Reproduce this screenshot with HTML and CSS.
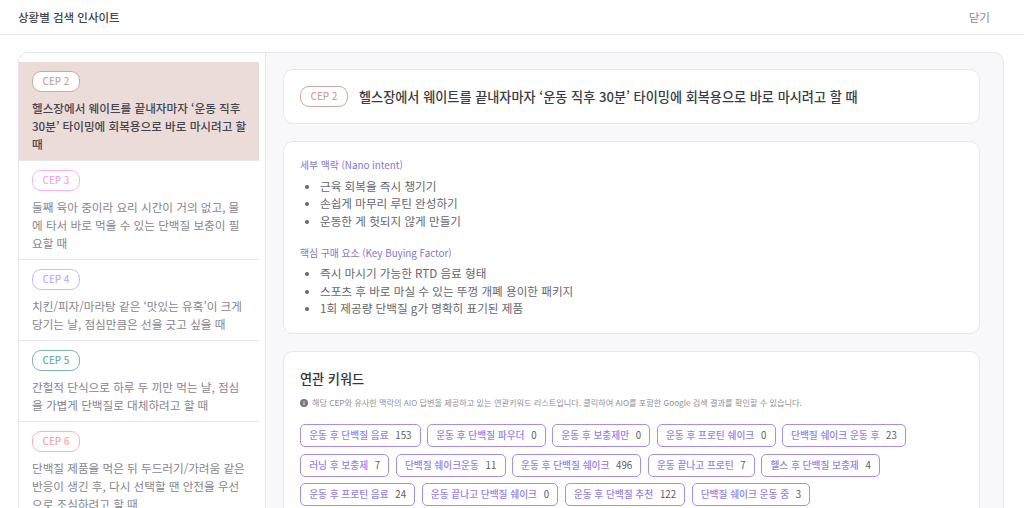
FILE: index.html
```html
<!DOCTYPE html>
<html lang="ko">
    <head>
        <meta charset="UTF-8" />
        <meta name="viewport" content="width=device-width, initial-scale=1.0" />
        <title>상황별 검색 인사이트</title>
        <link rel="stylesheet" href="styles.css">
    </head>
    <body>
        <div class="top_bar">
            <h1 class="top_title">상황별 검색 인사이트</h1>
            <button class="close_btn" type="button">닫기</button>
        </div>

        <div class="panel">
            <!-- 왼쪽 CEP 목록 -->
            <div class="side">
                <div class="cep_item on">
                    <span class="cep_tag tag2">CEP 2</span>
                    <p>헬스장에서 웨이트를 끝내자마자 ‘운동 직후 30분’ 타이밍에 회복용으로 바로 마시려고 할 때</p>
                </div>
                <div class="cep_item">
                    <span class="cep_tag tag3">CEP 3</span>
                    <p>둘째 육아 중이라 요리 시간이 거의 없고, 물에 타서 바로 먹을 수 있는 단백질 보충이 필요할 때</p>
                </div>
                <div class="cep_item">
                    <span class="cep_tag tag4">CEP 4</span>
                    <p>치킨/피자/마라탕 같은 ‘맛있는 유혹’이 크게 당기는 날, 점심만큼은 선을 긋고 싶을 때</p>
                </div>
                <div class="cep_item">
                    <span class="cep_tag tag5">CEP 5</span>
                    <p>간헐적 단식으로 하루 두 끼만 먹는 날, 점심을 가볍게 단백질로 대체하려고 할 때</p>
                </div>
                <div class="cep_item">
                    <span class="cep_tag tag6">CEP 6</span>
                    <p>단백질 제품을 먹은 뒤 두드러기/가려움 같은 반응이 생긴 후, 다시 선택할 땐 안전을 우선으로 조심하려고 할 때</p>
                </div>
            </div>

            <!-- 오른쪽 상세 -->
            <div class="detail">
                <div class="card head_card">
                    <span class="cep_tag tag2">CEP 2</span>
                    <h2>헬스장에서 웨이트를 끝내자마자 ‘운동 직후 30분’ 타이밍에 회복용으로 바로 마시려고 할 때</h2>
                </div>

                <div class="card info_card">
                    <h3>세부 맥락 (Nano intent)</h3>
                    <ul>
                        <li>근육 회복을 즉시 챙기기</li>
                        <li>손쉽게 마무리 루틴 완성하기</li>
                        <li>운동한 게 헛되지 않게 만들기</li>
                    </ul>
                    <h3>핵심 구매 요소 (Key Buying Factor)</h3>
                    <ul>
                        <li>즉시 마시기 가능한 RTD 음료 형태</li>
                        <li>스포츠 후 바로 마실 수 있는 뚜껑 개폐 용이한 패키지</li>
                        <li>1회 제공량 단백질 g가 명확히 표기된 제품</li>
                    </ul>
                </div>

                <div class="card key_card">
                    <h4>연관 키워드</h4>
                    <p class="key_note">
                        <svg width="8" height="8" viewBox="0 0 10 10">
                            <circle cx="5" cy="5" r="5" fill="#77777f" />
                            <rect x="4.4" y="4.4" width="1.2" height="3.2" fill="#fff" />
                            <rect x="4.4" y="2.4" width="1.2" height="1.2" fill="#fff" />
                        </svg>
                        해당 CEP와 유사한 맥락의 AIO 답변을 제공하고 있는 연관키워드 리스트입니다. 클릭하여 AIO를 포함한 Google 검색 결과를 확인할 수 있습니다.
                    </p>
                    <div class="key_list">
                        <a class="key_btn">운동 후 단백질 음료 <b>153</b></a>
                        <a class="key_btn">운동 후 단백질 파우더 <b>0</b></a>
                        <a class="key_btn">운동 후 보충제만 <b>0</b></a>
                        <a class="key_btn">운동 후 프로틴 쉐이크 <b>0</b></a>
                        <a class="key_btn">단백질 쉐이크 운동 후 <b>23</b></a>
                        <a class="key_btn">러닝 후 보충제 <b>7</b></a>
                        <a class="key_btn">단백질 쉐이크운동 <b>11</b></a>
                        <a class="key_btn">운동 후 단백질 쉐이크 <b>496</b></a>
                        <a class="key_btn">운동 끝나고 프로틴 <b>7</b></a>
                        <a class="key_btn">헬스 후 단백질 보충제 <b>4</b></a>
                        <a class="key_btn">운동 후 프로틴 음료 <b>24</b></a>
                        <a class="key_btn">운동 끝나고 단백질 쉐이크 <b>0</b></a>
                        <a class="key_btn">운동 후 단백질 추천 <b>122</b></a>
                        <a class="key_btn">단백질 쉐이크 운동 중 <b>3</b></a>
                    </div>
                </div>
            </div>
        </div>
    </body>
</html>
```

FILE: styles.css
```css
* {
    margin: 0px;
    padding: 0px;
    box-sizing: border-box;
}

html,
body {
    height: 508px;
    overflow: hidden;
}

body {
    background-color: #fff;
    color: #33333b;
    font-family: "Noto Sans CJK KR", "Noto Sans", sans-serif;
}

/* 상단 바 */
.top_bar {
    display: flex;
    justify-content: space-between;
    align-items: center;
    height: 35px;
    padding: 0px 34px 0px 18px;
    border-bottom: 1px solid #e8e8ee;
}

.top_title {
    font-size: 11.5px;
    font-weight: 500;
    color: #44444c;
}

.close_btn {
    border: none;
    background: none;
    font-family: inherit;
    font-size: 11.6px;
    color: #8a8a92;
}

/* 전체 박스 */
.panel {
    display: flex;
    width: 986px;
    height: 600px;
    margin: 17px 0px 0px 18px;
    border: 1px solid #e6e6ec;
    border-radius: 10px;
    background-color: #f8f8fa;
    overflow: hidden;
}

/* 왼쪽 목록 */
.side {
    flex: none;
    width: 247px;
    padding: 8.7px 6px 0px 0px;
    background-color: #fff;
    border-right: 1px solid #e6e6ec;
}

.cep_item {
    padding: 9px 12px 6.5px 13px;
    border-bottom: 1px solid #e6e6ec;
}

.cep_item.on {
    background-color: #ebdcd9;
}

.cep_item .cep_tag {
    display: block;
}

.cep_item p {
    margin-top: 7.5px;
    font-size: 11.6px;
    line-height: 18px;
    color: #85858d;
}

.cep_item.on p {
    font-weight: 500;
    color: #44444c;
}

.cep_tag {
    display: inline-block;
    flex: none;
    width: 48px;
    height: 21px;
    border: 1px solid;
    border-radius: 9px;
    background-color: #fff;
    font-size: 9.8px;
    font-weight: 500;
    line-height: 19px;
    text-align: center;
}

.tag2 {
    border-color: #cfa99e;
    color: #c9a79c;
}
.tag3 {
    border-color: #fbb4ec;
    color: #f9a6e6;
}
.tag4 {
    border-color: #cdb8fb;
    color: #c4adfa;
}
.tag5 {
    border-color: #7fb8a9;
    color: #6fb0a0;
}
.tag6 {
    border-color: #ffb3b3;
    color: #ffa5a5;
}

/* 오른쪽 상세 */
.detail {
    flex: 1;
    padding: 16px 23px 0px 17px;
}

.card {
    margin-bottom: 17px;
    padding: 0px 16px;
    background-color: #fff;
    border: 1px solid #e6e6ec;
    border-radius: 10px;
}

.head_card {
    display: flex;
    align-items: center;
    gap: 11px;
    height: 55px;
}

.head_card h2 {
    font-size: 13.15px;
    font-weight: 500;
    color: #3a3a42;
}

.info_card {
    height: 193px;
    padding-top: 15px;
}

.info_card h3 {
    font-size: 9.8px;
    font-weight: 400;
    line-height: 16px;
    color: #8474cf;
}

.info_card ul {
    margin: 4.5px 0px 14.7px;
    padding-left: 20px;
    font-size: 11.6px;
    line-height: 17.5px;
    color: #66666e;
}

.key_card {
    padding-top: 17px;
    padding-bottom: 30px;
}

.key_card h4 {
    font-size: 13.15px;
    font-weight: 500;
    line-height: 20px;
    color: #33333b;
}

.key_note {
    display: flex;
    align-items: center;
    gap: 4px;
    margin-top: 7px;
    font-size: 8.16px;
    line-height: 14px;
    color: #8f8f97;
}

.key_list {
    display: flex;
    flex-wrap: wrap;
    gap: 6.5px 6.3px;
    margin-top: 14px;
}

.key_btn {
    display: block;
    height: 23px;
    padding: 0px 8.2px;
    border: 1px solid #a48df5;
    border-radius: 5px;
    font-size: 9.7px;
    font-weight: 500;
    line-height: 21px;
    color: #9480ee;
}

.key_btn b {
    margin-left: 4px;
    font-weight: 400;
    color: #5c5c64;
}
```
